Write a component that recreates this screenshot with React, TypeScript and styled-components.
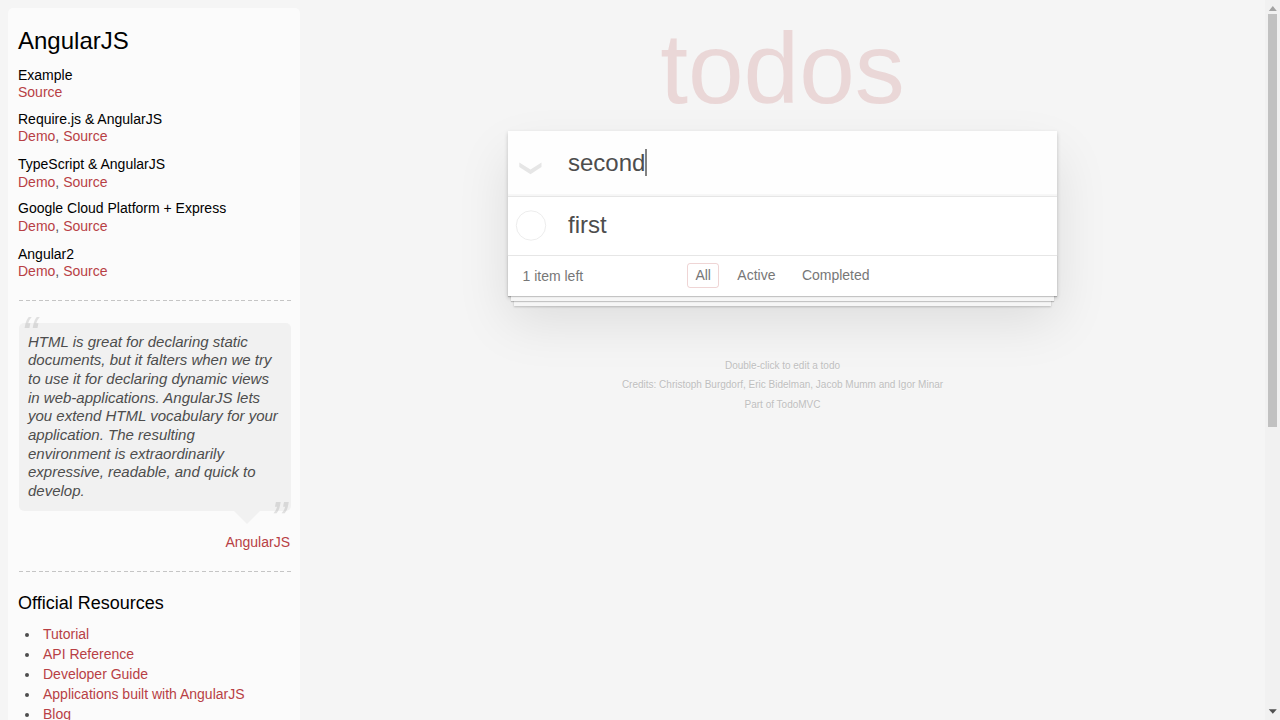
import React from 'react';
import styled, { createGlobalStyle } from 'styled-components';

const GlobalStyle = createGlobalStyle`
  body {
    margin: 0;
    background: #f5f5f5;
    color: #4d4d4d;
    font: 14px/1.4em 'Liberation Sans', Arial, sans-serif;
    overflow: hidden;
  }
`;

const Page = styled.div`
  display: grid;
  grid-template-columns: 300px 1fr 15px;
  grid-template-rows: 720px;
  height: 720px;
  overflow: hidden;
`;

const Learn = styled.aside`
  width: 272px;
  height: 900px;
  margin: 8px 0 0 8px;
  padding: 10px;
  border-radius: 5px;
  background: rgba(255, 255, 255, 0.6);
`;

const LearnTitle = styled.h3`
  margin: 9px 0 12px;
  font-size: 24px;
  font-weight: 500;
  line-height: 28px;
  color: #000;
`;

const LearnSubtitle = styled.h4`
  margin: 10px 0;
  font-size: 18px;
  font-weight: 500;
  line-height: 1.2;
  color: #000;
`;

const Example = styled.div<{ $gap: number }>`
  margin-top: ${(p) => p.$gap}px;
`;

const ExampleTitle = styled.h5<{ $height: number }>`
  height: ${(p) => p.$height}px;
  margin: 0;
  font-size: 14px;
  font-weight: 500;
  line-height: 1.2;
  color: #000;
`;

const ExampleLinks = styled.div`
  line-height: 18px;
`;

const Link = styled.a`
  color: #b83f45;
  text-decoration: none;
`;

const Divider = styled.hr`
  height: 1px;
  margin: 20px -1px 21px 1px;
  border: 0;
  background: repeating-linear-gradient(90deg, #c5c5c5 0 4px, transparent 4px 6.537px);
`;

const Quote = styled.blockquote`
  position: relative;
  margin: 21.7px -0.6px 60px 0.6px;
  padding: 10px 10.6px 10px 9.4px;
  border-radius: 5px;
  background: rgba(0, 0, 0, 0.04);

  &::after {
    content: '';
    position: absolute;
    top: 100%;
    right: 30.6px;
    border: 13px solid transparent;
    border-top-color: rgba(0, 0, 0, 0.04);
  }
`;

const QuoteText = styled.p`
  margin: 0;
  font-size: 15px;
  font-style: italic;
  line-height: 18.67px;

  &::before,
  &::after {
    position: absolute;
    font-size: 50px;
    line-height: 65px;
    opacity: 0.15;
  }
  &::before {
    content: '“';
    top: -20px;
    left: 2.4px;
  }
  &::after {
    content: '”';
    bottom: -42px;
    right: 3.8px;
  }
`;

const QuoteSource = styled.footer`
  position: absolute;
  right: 0.6px;
  bottom: -42px;
`;

const ResourceList = styled.ul`
  margin: 0 0 30px 7px;
  padding: 0;
  list-style: none;
  line-height: 20px;
`;

const Resource = styled.li`
  display: flex;
  align-items: center;

  &::before {
    content: '';
    width: 4.4px;
    height: 4.4px;
    margin: 1.6px 13.5px 0 0.1px;
    border-radius: 50%;
    background: #4d4d4d;
  }
`;

const Main = styled.main`
  display: flex;
  flex-direction: column;
  align-items: center;
`;

const Title = styled.h1`
  box-sizing: border-box;
  height: 130.5px;
  margin: 0;
  padding-top: 11px;
  font-size: 100px;
  font-weight: 100;
  line-height: 115px;
  color: rgba(175, 47, 47, 0.15);
`;

const Card = styled.section`
  width: 549px;
  background: #fff;
  box-shadow: 0 2px 4px 0 rgba(0, 0, 0, 0.2), 0 25px 50px 0 rgba(0, 0, 0, 0.1);
`;

const EntryRow = styled.div`
  display: flex;
  align-items: center;
  box-sizing: border-box;
  height: 65.5px;
  background: rgba(0, 0, 0, 0.003);
  box-shadow: inset 0 -2px 1px rgba(0, 0, 0, 0.03);
  font-size: 24px;
  line-height: 28px;
`;

const ToggleAll = styled.span`
  width: 60px;
  display: flex;

  svg {
    margin: 10px 0 0 10.5px;
  }
`;

const Caret = styled.span`
  width: 2px;
  height: 27px;
  margin-bottom: 2px;
  background: #828282;
`;

const TodoRow = styled.div`
  display: flex;
  box-sizing: border-box;
  height: 59px;
  border-top: 1px solid #e6e6e6;
  font-size: 24px;
  line-height: 56px;
`;

const Toggle = styled.span`
  width: 60px;
  display: flex;

  svg {
    margin: 13px 0 0 7px;
  }
`;

const CardFooter = styled.footer`
  display: grid;
  grid-template-columns: 1fr auto 1fr;
  align-items: start;
  height: 20px;
  padding: 10px 14.5px;
  border-top: 1px solid #e6e6e6;
  color: #777;
  line-height: 20px;
  box-shadow: 0 1px 1px rgba(0, 0, 0, 0.2), 0 8px 0 -3px #f6f6f6,
    0 9px 1px -3px rgba(0, 0, 0, 0.2), 0 16px 0 -6px #f6f6f6,
    0 17px 2px -6px rgba(0, 0, 0, 0.2);
`;

const Filters = styled.nav`
  display: flex;
  gap: 10.4px;
  margin-top: -3px;
`;

const Filter = styled.a<{ $selected?: boolean }>`
  padding: 3px 7px;
  border: 1px solid ${(p) => (p.$selected ? 'rgba(175, 47, 47, 0.2)' : 'transparent')};
  border-radius: 3px;
  line-height: 17px;
`;

const Info = styled.footer`
  margin-top: 64.6px;
  color: #bfbfbf;
  font-size: 10px;
  text-align: center;
  text-shadow: 0 1px 0 rgba(255, 255, 255, 0.5);
`;

const InfoLine = styled.p`
  margin: 0 0 9.6px;
  line-height: 10px;
`;

const Scrollbar = styled.div`
  display: flex;
  flex-direction: column;
  align-items: center;
  background: #f1f1f1;
`;

const Thumb = styled.div`
  width: 9.5px;
  height: 413px;
  margin-bottom: auto;
  background: #c1c1c1;
`;

const examples = [
  { name: 'Example', demo: false, gap: 10, height: 16 },
  { name: 'Require.js & AngularJS', demo: true, gap: 10, height: 16 },
  { name: 'TypeScript & AngularJS', demo: true, gap: 11, height: 17 },
  { name: 'Google Cloud Platform + Express', demo: true, gap: 9, height: 17 },
  { name: 'Angular2', demo: true, gap: 11, height: 16 },
];

const resources = ['Tutorial', 'API Reference', 'Developer Guide', 'Applications built with AngularJS', 'Blog'];

const credits = [
  'Double-click to edit a todo',
  'Credits: Christoph Burgdorf, Eric Bidelman, Jacob Mumm and Igor Minar',
  'Part of TodoMVC',
];

export default function App() {
  return (
    <>
      <GlobalStyle />
      <Page>
        <Learn>
          <LearnTitle>AngularJS</LearnTitle>
          {examples.map((e) => (
            <Example key={e.name} $gap={e.gap}>
              <ExampleTitle $height={e.height}>{e.name}</ExampleTitle>
              <ExampleLinks>
                {e.demo && (
                  <>
                    <Link>Demo</Link>,{' '}
                  </>
                )}
                <Link>Source</Link>
              </ExampleLinks>
            </Example>
          ))}
          <Divider />
          <Quote>
            <QuoteText>
              HTML is great for declaring static documents, but it falters when we try to use it for declaring
              dynamic views in web-applications. AngularJS lets you extend HTML vocabulary for your application.
              The resulting environment is extraordinarily expressive, readable, and quick to develop.
            </QuoteText>
            <QuoteSource>
              <Link>AngularJS</Link>
            </QuoteSource>
          </Quote>
          <Divider />
          <LearnSubtitle>Official Resources</LearnSubtitle>
          <ResourceList>
            {resources.map((r) => (
              <Resource key={r}>
                <Link>{r}</Link>
              </Resource>
            ))}
          </ResourceList>
        </Learn>
        <Main>
          <Title>todos</Title>
          <Card>
            <EntryRow>
              <ToggleAll>
                <svg width="23" height="13" viewBox="0 0 23 13">
                  <path d="M0.3 0.5L11.5 7.5L22.5 0.5V5L11.5 12.3L0.3 5Z" fill="#e6e6e6" />
                </svg>
              </ToggleAll>
              second
              <Caret />
            </EntryRow>
            <TodoRow>
              <Toggle>
                <svg width="32" height="31" viewBox="0 0 32 31">
                  <circle cx="16" cy="15.5" r="14.7" fill="none" stroke="#ededed" />
                </svg>
              </Toggle>
              first
            </TodoRow>
            <CardFooter>
              <span>1 item left</span>
              <Filters>
                <Filter $selected>All</Filter>
                <Filter>Active</Filter>
                <Filter>Completed</Filter>
              </Filters>
            </CardFooter>
          </Card>
          <Info>
            {credits.map((c) => (
              <InfoLine key={c}>{c}</InfoLine>
            ))}
          </Info>
        </Main>
        <Scrollbar>
          <svg width="15" height="14" viewBox="0 0 15 14">
            <path d="M7.8 6L11.8 11H3.8Z" fill="#a3a3a3" />
          </svg>
          <Thumb />
          <svg width="15" height="14" viewBox="0 0 15 14">
            <path d="M7.8 7.8L11.8 3.2H3.8Z" fill="#505050" />
          </svg>
        </Scrollbar>
      </Page>
    </>
  );
}
